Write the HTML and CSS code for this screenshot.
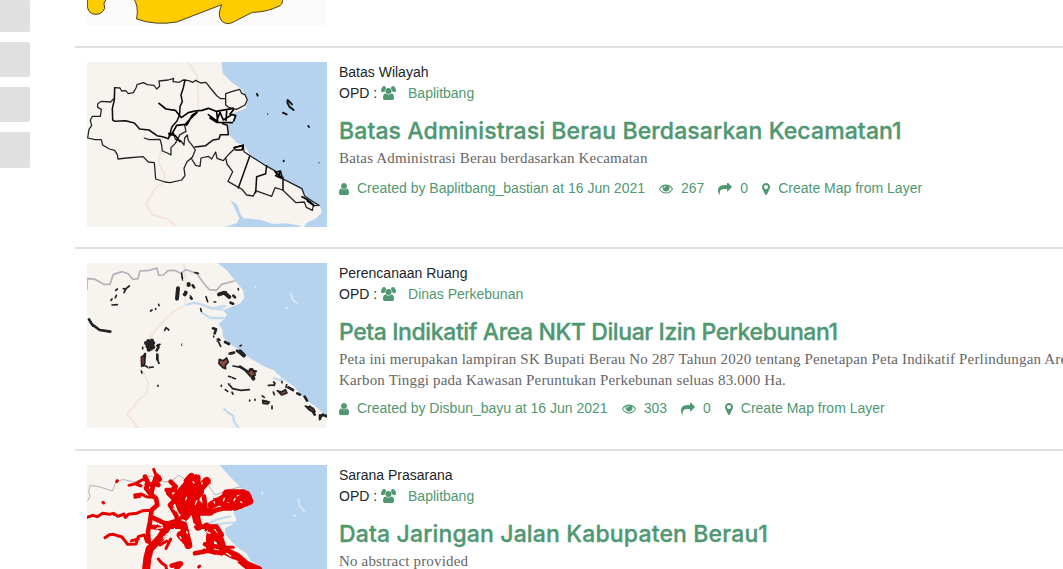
FILE: index.html
```html
<!DOCTYPE html>
<html lang="id">
<head>
<meta charset="utf-8">
<title>Layers</title>
<link rel="stylesheet" href="styles.css">
</head>
<body>
<svg class="defs" width="0" height="0" aria-hidden="true">
  <filter id="rough" x="-5%" y="-5%" width="110%" height="110%"><feTurbulence type="fractalNoise" baseFrequency="0.22" numOctaves="2" seed="4"/><feDisplacementMap in="SourceGraphic" scale="5" xChannelSelector="R" yChannelSelector="G"/></filter>
  <filter id="wobble" x="-5%" y="-5%" width="110%" height="110%"><feTurbulence type="fractalNoise" baseFrequency="0.18" numOctaves="1" seed="9"/><feDisplacementMap in="SourceGraphic" scale="2.5" xChannelSelector="R" yChannelSelector="G"/></filter>
  <symbol id="users" viewBox="0 0 1920 1792"><path d="M593 640q-162 5-265 128h-134q-82 0-138-40.5t-56-118.5q0-353 124-353 6 0 43.5 21t97.5 42.5 119 21.5q67 0 133-23-5 37-5 66 0 159 81 289zM1664 1533q0 120-73 189.5t-194 69.5h-874q-121 0-194-69.5t-73-189.5q0-53 3.5-103.5t14-109 26.5-108.5 43-97.5 62-81 85.5-53.5 111.5-20q10 0 43 21.5t73 48 107 48 135 21.5 135-21.5 107-48 73-48 43-21.5q61 0 111.5 20t85.5 53.5 62 81 43 97.5 26.5 108.5 14 109 3.5 103.5zM1920 609q0 78-56 118.5t-138 40.5h-134q-103-123-265-128 81-130 81-289 0-29-5-66 66 23 133 23 59 0 119-21.5t97.5-42.5 43.5-21q124 0 124 353z"/><circle cx="384" cy="256" r="256"/><circle cx="960" cy="640" r="384"/><circle cx="1536" cy="256" r="256"/></symbol>
  <symbol id="user" viewBox="256 128 1280 1536"><path d="M1536 1399q0 109-62.5 187t-150.5 78h-854q-88 0-150.5-78t-62.5-187q0-85 8.5-160.5t31.5-152 58.5-131 94-89 134.5-34.5q131 128 313 128t313-128q76 0 134.5 34.5t94 89 58.5 131 31.5 152 8.5 160.5zm-256-887q0 159-112.5 271.5t-271.5 112.5-271.5-112.5-112.5-271.5 112.5-271.5 271.5-112.5 271.5 112.5 112.5 271.5z"/></symbol>
  <symbol id="eye" viewBox="0 192 1792 1536"><path d="M1664 960q-152-236-381-353 61 104 61 225 0 185-131.5 316.5t-316.5 131.5-316.5-131.5-131.5-316.5q0-121 61-225-229 117-381 353 133 205 333.5 326.5t434.5 121.5 434.5-121.5 333.5-326.5zm-720-384q0-20-14-34t-34-14q-125 0-214.5 89.5t-89.5 214.5q0 20 14 34t34 14 34-14 14-34q0-86 61-147t147-61q20 0 34-14t14-34zm848 384q0 34-20 69-140 230-376.5 368.5t-499.5 138.5-499.5-139-376.5-368q-20-35-20-69t20-69q140-229 376.5-368t499.5-139 499.5 139 376.5 368q20 35 20 69z"/></symbol>
  <symbol id="share" viewBox="0 128 1792 1536"><path d="M1792 640q0 26-19 45l-512 512q-19 19-45 19t-45-19-19-45v-256h-224q-98 0-175.5 6t-154 21.5-133 42.5-105.5 69.5-80 101-48.5 138.5-17.5 181q0 55 5 123 0 6 2.5 23.5t2.5 26.5q0 15-8.5 25t-23.5 10q-16 0-28-17-7-9-13-22t-13.5-30-10.5-24q-127-285-127-451 0-199 53-333 162-403 875-403h224v-256q0-26 19-45t45-19 45 19l512 512q19 19 19 45z"/></symbol>
  <symbol id="marker" viewBox="384 128 1024 1536"><path d="M1152 640q0-106-75-181t-181-75-181 75-75 181 75 181 181 75 181-75 75-181zm256 0q0 109-33 179l-364 774q-16 33-47.5 52t-67.5 19-67.5-19-46.5-52l-365-774q-33-70-33-179 0-212 150-362t362-150 362 150 150 362z"/></symbol>
  <symbol id="basemap" viewBox="0 0 720 495">
    <path class="land" d="M0 0h720v495H0z"/>
    <path class="sea" d="M391 0L420 22 450 60 468 82 472 104 458 122 432 132 408 142 420 155 408 172 395 182 406 200 408 222 425 240 462 264 480 280 530 310 560 322 585 345 620 370 650 404 690 434 704 448 720 462V0z"/>
    <path class="inlet" d="M300 125q20-10 45 0l30 12 40-8M345 150l25 15 38 0M375 135l30 5M560 345l22 8 10-8M412 438l10 10 16 10 3 18 14 19"/>
    <path class="road" d="M290 0l4 26 4 60-5 42-30 15-45 42-30 40-20 25M170 330l14 30-6 32-25 20-15 22-18 18 20 24 12 18"/>
    <path class="reef" d="M505 70v4M610 90l8 20 12 12M596 134l5 2"/>
  </symbol>
</svg>
<div class="page">
  <aside class="sidebar"><div class="box"></div><div class="box"></div><div class="box"></div><div class="box last"></div></aside>
  <main class="list">
    <article class="item cut">
      <svg class="thumb short" viewBox="261 0 720 75"><path class="plain" d="M261 0h720v75H261z"/><path class="yellow" d="M262-5V20Q266 43 288 43 306 43 314 25L312 10 320-5zM400-5Q417 14 410 57 465 77 530 66L665 14Q650 48 667 65 683 76 700 66L757 37Q800 37 840 17 850 10 847-5z"/></svg>
    </article>
    <article class="item first">
      <svg class="thumb" viewBox="21 21 720 495">
        <path class="land" d="M21 21h720v495H21z"/>
        <path class="sea" d="M425 21L428 55 455 82 485 103 503 135 498 160 460 175 465 193 445 208 448 240 470 263 495 273 510 300 555 330 585 347 615 372 660 402 690 442 720 455 726 470 710 490 680 503 672 516H741V21zM452 435L472 450 480 475 490 490 540 494 580 507 620 505 660 512 664 516H435L470 505 478 490z"/>
        <path class="road" d="M325 21l12 20 14 20 4 65v45M242 290l-5 35 18 35-4 22-25 18-28 48 20 32 40 10 26 20"/>
        <g class="borders wobbly">
          <path d="M104 98L120 99 125 108 137 107 145 116 160 113 168 99 171 89 190 83 202 89 222 91 230 102 239 94 237 78 265 75 281 70 279 80 298 82 309 75 326 77 339 82 347 76 362 84 378 82 391 99 411 123 422 131 437 130 437 116 455 110 479 103 485 115 495 119 502 134 495 150 470 163 448 158 437 150 437 132"/>
          <path class="bold" d="M104 98L103 135 97 160 98 195 105 199 137 197 163 204 179 222 207 225 231 242 251 246 265 251 270 235 276 215 291 198 299 179 300 155 307 140 303 120 310 98 315 75"/>
          <path d="M102 130L92 141 64 139 53 146 53 157 64 163 61 184 37 184 31 196 35 211 27 223 23 249 45 254 64 254 68 270 88 282 104 286 112 299 114 312 140 309 189 305 205 321 223 323 227 372 255 381 270 383 305 375 315 362 312 340 321 320 337 307 346 285 335 269 325 257 322 240 314 249 312 270 302 257 286 253 280 232 267 247"/>
          <path d="M193 249L207 254 240 253 245 270 247 288 262 294 273 300 273 278 286 265 300 239 318 229 314 211 324 205M333 309L347 331 360 334 363 309 385 304 395 312 407 291 411 310 430 317 448 296 469 276 490 270 492 290 510 302 557 332 584 347 593 366 613 374 666 401 674 423 695 437 717 451 700 452 697 466 679 457 673 441 648 443 608 405 585 398 575 424 527 407 520 423 500 420 485 402 470 394 444 379 458 350 441 327 437 308"/>
          <path class="bold" d="M345 276L377 272 399 255 417 252 421 239 445 239 442 211 428 206M509 304L475 399M560 332L557 356 530 365 527 413M609 367V405M590 350L602 349 606 365"/>
        </g>
        <g class="borders heavy wobbly"><path d="M237 145L258 162 286 166 304 188 325 173 345 168 366 166 385 160 408 169 460 160M270 240L278 233 290 211 316 208 329 194 337 180 352 171M266 236l20 6 14 18M385 179L410 198 420 172 430 195 457 178M390 189L410 202 457 203M410 171l3 29M440 169l-2 27M460 165l-10 12 17 5-6 16M320 210l12-20 18-16M462 278l28-7-4 14-20 0M585 349l20 19-18-6M600 348l-2 16M666 425l18 10 18 16M682 438l20 14"/></g>
        <g class="islands"><path d="M531 117l2 5M623 135l-1 8 6 12 13 10M626 138l10 10M609 173l11 5M685 213l2 3M611 317v2"/><path class="thin" d="M717 323v1M563 176v2"/></g>
      </svg>
      <div class="info">
        <div class="line">Batas Wilayah</div>
        <div class="line">OPD : <svg class="i-users"><use href="#users"/></svg><a>Baplitbang</a></div>
        <h3 class="t1">Batas Administrasi Berau Berdasarkan Kecamatan1</h3>
        <p class="abstract">Batas Administrasi Berau berdasarkan Kecamatan</p>
        <div class="meta"><span><svg class="i-user"><use href="#user"/></svg>Created by Baplitbang_bastian at 16 Jun 2021</span><span><svg class="i-eye"><use href="#eye"/></svg>267</span><span><svg class="i-share"><use href="#share"/></svg>0</span><span><svg class="i-marker"><use href="#marker"/></svg>Create Map from Layer</span></div>
      </div>
    </article>
    <article class="item second">
      <svg class="thumb" viewBox="21 21 720 495">
        <use href="#basemap" x="21" y="21" width="720" height="495"/>
        <path class="ridge" d="M21 100V68L43 69 72 85 90 85 100 55 127 47 145 53 158 70 174 68 180 45 208 43 231 36 236 58 250 57 264 44 283 43 302 52 318 41 350 52 366 75 388 101 410 103 425 85 463 75"/>
        <g class="spots rough">
          <path class="w9" d="M294 97l-3 31M198 261l22 0-18 10 18 2-14 8M216 254l-10 25M205 255l3 25M417 115l16-5 15 13M512 342l8 26M480 286l12 12M326 84v3M314 115l3-5"/>
          <path class="w6" d="M27 190l9 15 23 17 32 5M338 88l4 6M331 122l4 6M399 217l9 3-4 12M435 258l12 6M449 293l13-3M195 294l-4 34M471 284l20 16M480 332l25 16 22-2M625 394l14 8M652 412l8 4M674 422l7 12M690 452l14 24M720 485l8-9 16 6M720 478v12M452 140l7 3M460 119l5 5M235 267v8l-5 8M232 296v14"/>
          <path class="w5" d="M132 110l6-12 10-8M107 103l5-4M93 133l3-4M106 125l3-7M96 147l16-1M130 98l8 2M212 165l4-3M227 160v-2M236 145l1 4M254 223l4-8 8 6M306 265v2M232 310l5 12M197 330l8 5 15-2M184 345l2 6M188 279v-5M240 265l-10 4M234 388v3M362 158l2 8M378 122l5 15M402 138h5M305 52l3 20M345 50l10 2M475 98v4M412 250l10 21M416 248l4 5M401 240v3M480 270l4-2M459 330l24 4M446 361l20 7M446 384l12 14 25 5 25-2M424 388v3M436 401l7 5M456 409l3 5M509 432v3M525 430v3M547 420l6 4M573 387l10 1 1-8M565 388h8M585 383l-4-5M580 408l3 8M620 386l-2 8M606 380v-3M576 450v8"/>
        </g>
        <path class="brown rough" d="M418 310l12 4 10-8 5 12-9 10 1 10-8-3-12-12zM498 346l12 0 8-7 8 18-14 5zM548 433l20 5-5 6-14-2zM592 404l12 4 12-7 5 10-16 6zM676 450l24 7 5 10-15-3zM184 303l8-5 2 25-9 8z"/>
      </svg>
      <div class="info">
        <div class="line">Perencanaan Ruang</div>
        <div class="line">OPD : <svg class="i-users"><use href="#users"/></svg><a>Dinas Perkebunan</a></div>
        <h3 class="t2">Peta Indikatif Area NKT Diluar Izin Perkebunan1</h3>
        <p class="abstract">Peta ini merupakan lampiran SK Bupati Berau No 287 Tahun 2020 tentang Penetapan Peta Indikatif Perlindungan Area<br>Karbon Tinggi pada Kawasan Peruntukan Perkebunan seluas 83.000 Ha.</p>
        <div class="meta"><span><svg class="i-user"><use href="#user"/></svg>Created by Disbun_bayu at 16 Jun 2021</span><span><svg class="i-eye"><use href="#eye"/></svg>303</span><span><svg class="i-share"><use href="#share"/></svg>0</span><span><svg class="i-marker"><use href="#marker"/></svg>Create Map from Layer</span></div>
      </div>
    </article>
    <article class="item third">
      <svg class="thumb" viewBox="21 60 720 495">
        <path class="land" d="M21 60h720v495H21z"/>
        <path class="sea" d="M419 60L450 95 480 125 510 150 518 170 500 188 460 200 470 225 455 240 435 250 437 270 455 290 475 310 500 325 510 345 560 380 741 555V60z"/>
        <path class="inlet" d="M380 238l30-14 40-10M390 240l40-5 30-2"/>
        <path class="reef" d="M545 140l4 6M655 162l4 20 14 18M640 210l7 3"/>
        <path class="ridge thin" d="M23 168l7-15-4-12 4-20 30 5 37 12 10-25 20-10 35 8 30-10 20-8 40 18 20-2 25-18 15 10M370 100l35 50 50-18 30-7"/>
        <g class="roads rough">
          <path class="w8" d="M21 217L38 211 52 215 68 205 88 208 100 205 114 214 132 207 136 217 145 208 170 205 188 197 215 196M75 278L88 269 100 268 126 276 143 298 168 297 175 275 193 270 200 290M147 121l20-5 20-12 15 0M221 73l6 15 12 8M164 150l20-3 15 8 18 2M165 157l15-3M168 117l15 6M155 287l20-5M110 110l2-3M69 172l2 2M235 342l10 12 12 8 3 12M356 366l3-3M240 300l20-12M258 310l14-28M404 325l-32-10M460 307l-28 0"/>
          <path class="w14" d="M195 95L205 115 198 130 210 145 228 160 232 180 215 195 210 230 204 260 206 290M230 92L220 118 213 150M200 118l22 0 17-15M212 215l25 12 26 12M207 245l30 3 15 10M272 110l15 15-22 20 20 20-15 15 18 30 5 15M260 135l25 0M235 120l-15-5M372 155l5 40M385 205l25-10 40-10M350 245l60 0 15 25M375 298l50 10M345 325l40-8 40 8M275 362l20-6 8 0-13 14"/>
          <path class="w20" d="M198 376L202 340 209 312 240 280 265 240 300 230 320 210 322 110 334 96 330 200M302 145L310 200M345 105L360 130 380 108M350 100L345 200 355 245M320 120L290 155 305 195 330 180 360 200 390 200M360 140l-20 25 20 20M302 270L320 290M260 240L310 240 325 300M380 245L400 270 420 285 430 315 470 335 500 360 535 375M390 275v35M395 180L440 155 470 170 500 150 508 168 480 180 460 165 490 145 440 145 430 170 410 170M435 185l30 0 25-10"/>
        </g>
        <path class="gaps rough" d="M230 250l18-2M250 280l12-14M270 305l15-15M338 235l7 5M320 157l-3 8M346 178l4-10M430 168l3-8M462 167l3-6M472 153l4-3M482 170l3 3M402 170l2 4M386 215l4 5M280 190l8 7M306 225l9 3M380 260l10 5M440 325l12 8M463 345l10 5M339 110l3 4M366 112v5M320 260l2 5M300 275l3 5"/>
      </svg>
      <div class="info">
        <div class="line">Sarana Prasarana</div>
        <div class="line">OPD : <svg class="i-users"><use href="#users"/></svg><a>Baplitbang</a></div>
        <h3 class="t3">Data Jaringan Jalan Kabupaten Berau1</h3>
        <p class="abstract">No abstract provided</p>
      </div>
    </article>
  </main>
</div>
</body>
</html>
```
FILE: styles.css
```css
* { box-sizing: border-box; }
body { margin: 0; background: #fff; color: #212529; font: 14px/21px "Liberation Sans", Arial, sans-serif; overflow: hidden; }
.defs { display: block; height: 0; }
.page { display: flex; gap: 45px; height: 569px; overflow: hidden; }
.sidebar { flex: none; width: 30px; display: flex; flex-direction: column; gap: 10px; }
.box { height: 35px; flex: none; background: #e0e0e0; border-radius: 0 2px 2px 0; }
.box:first-child { height: 32px; }
.box.last { height: 36px; }
.list { flex: 1; min-width: 0; }
.item { display: flex; gap: 12px; padding: 14px 0 0 12px; border-top: 2px solid #e0e0e0; overflow: hidden; }
.item.cut { height: 46px; padding-top: 0; border-top: 0; }
.first { height: 201px; }
.second { height: 202px; }
.third { height: 230px; }
.thumb { flex: none; display: block; width: 240px; height: 165px; }
.thumb.short { height: 25px; }
.info { flex: none; white-space: nowrap; }
.line { height: 21px; }
.line a { margin-left: 12px; color: #509871; }
h3 { margin: 14px 0 3px; height: 27px; color: #509871; font: 500 23px/27px Inter, sans-serif; -webkit-text-stroke: 0.35px #509871; }
.t1 { letter-spacing: 0.11px; }
.t2 { letter-spacing: -0.4px; }
.t3 { letter-spacing: 0.15px; }
.abstract { margin: 0 0 9px; color: #666; font: 15px/21px "Liberation Serif", serif; letter-spacing: 0.17px; }
.second .abstract { margin-bottom: 7px; }
.meta { display: flex; gap: 14px; color: #509871; }
.meta span { display: flex; align-items: center; gap: 8px; }
.i-users, .i-user, .i-eye, .i-share, .i-marker { flex: none; fill: #509871; }
.i-users { width: 15px; height: 14px; vertical-align: -2px; }
.i-user { width: 10px; height: 12px; }
.i-eye { width: 14px; height: 12px; }
.i-share { width: 14px; height: 12px; }
.i-marker { width: 8px; height: 12px; }

.thumb path, #basemap path { stroke-linejoin: round; stroke-linecap: round; }
.rough { filter: url(#rough); }
.wobbly { filter: url(#wobble); }
.plain { fill: #fafafa; }
.yellow { fill: #ffcc00; stroke: #4c4222; stroke-width: 3; }
.land { fill: #f7f4ef; }
.sea { fill: #b5d2ee; }
.road { fill: none; stroke: #f3e2d9; stroke-width: 5; }
.ridge { fill: none; stroke: #b5b0b8; stroke-width: 5; }
.inlet { fill: none; stroke: #c4dbee; stroke-width: 7; }
.reef { fill: none; stroke: #d9e8f5; stroke-width: 5; }
.borders { fill: none; stroke: #242424; stroke-width: 3.8; }
.bold { stroke: #111; stroke-width: 4.6; }
.heavy { stroke: #000; stroke-width: 5; }
.islands { fill: none; stroke: #151515; stroke-width: 6; }
.thin { stroke-width: 3; }
.spots { fill: none; stroke: #202020; }
.brown { fill: #8b4b3b; stroke: #242020; stroke-width: 5; }
.roads { fill: none; stroke: #e60005; }
.w5 { stroke-width: 5; }
.w6 { stroke-width: 8; }
.w8 { stroke-width: 9; }
.w9 { stroke-width: 12; }
.w14 { stroke-width: 14; }
.w20 { stroke-width: 24; }
.gaps { fill: none; stroke: #f7f4ef; stroke-width: 4; }
```
